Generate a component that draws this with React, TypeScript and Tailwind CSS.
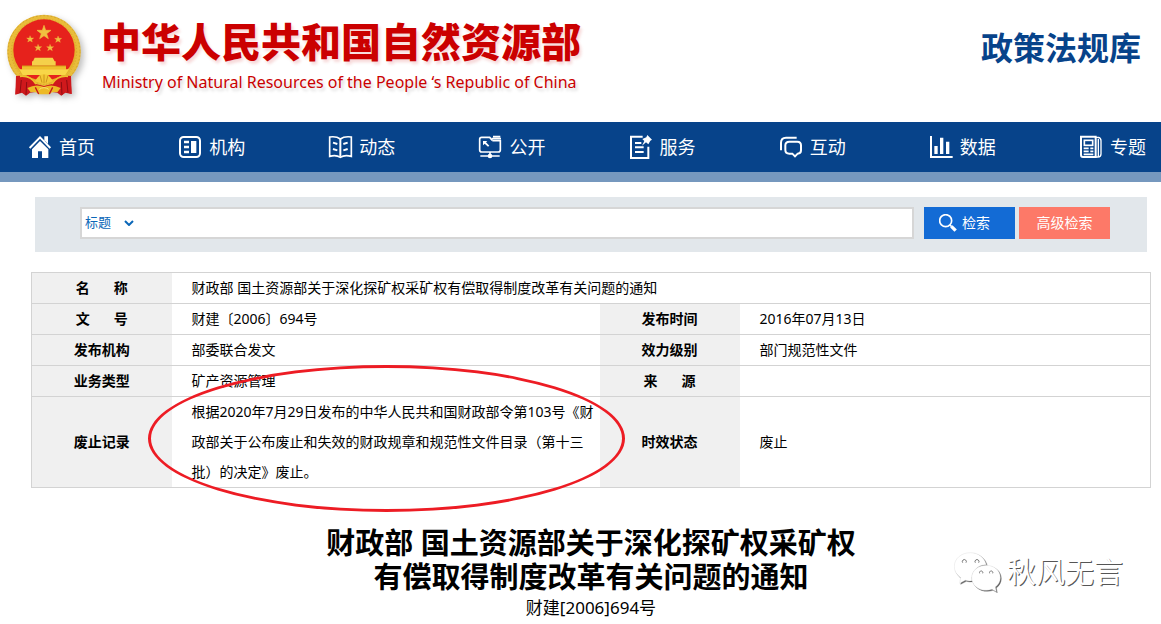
import type { ReactNode } from "react";

const Emblem = () => (
  <svg viewBox="15 20 240 264" className="h-22 w-20 shrink-0 drop-shadow-[3px_3px_3px_rgba(0,0,0,0.25)]" role="img" aria-label="国徽">
    <path d="M52 200 L46 268 L66 262 L78 271 L90 262 L132 256 L172 262 L184 271 L196 262 L215 266 L210 200 Z" fill="#c4161c" />
    <circle cx="132" cy="138" r="101" fill="#e3b02a" />
    <circle cx="132" cy="139" r="103" fill="none" stroke="#e9bd3a" strokeWidth="15" />
    <circle cx="132" cy="139" r="108" fill="none" stroke="#c4922a" strokeWidth="2" strokeDasharray="5 6" />
    <circle cx="132" cy="139" r="98" fill="none" stroke="#cf9c28" strokeWidth="2" strokeDasharray="4 5" />
    <circle cx="132" cy="134" r="92" fill="#e6221c" />
    <path d="M132 60 L137 75 L153 75 L140 85 L145 100 L132 91 L119 100 L124 85 L111 75 L127 75 Z" fill="#f0c040" stroke="#f0c040" strokeWidth="2" />
    <path id="star" d="M90 91 L93 98 L101 98 L95 103 L97 110 L90 106 L83 110 L86 103 L80 98 L88 98 Z" fill="#f0c040" stroke="#f0c040" strokeWidth="1" />
    <use href="#star" x="84" y="1" />
    <use href="#star" x="24" y="26" />
    <use href="#star" x="60" y="26" />
    <path d="M104 157 H158 L164 168 H99 Z M96 168 H167 V181 H96 Z" fill="#f5d04a" />
    <path d="M66 181 H198 V193 H66 Z" fill="#efc02c" />
    <path d="M58 192 H207 L196 209 H68 Z" fill="#f8d648" />
    <path d="M66 182 H198" stroke="#c98a12" strokeWidth="2" />
    <path d="M48 212 Q90 208 108 236 L132 242 L156 236 Q172 208 213 212 L215 266 L196 260 L184 270 L172 258 H92 L78 270 L66 260 L46 267 Z" fill="#cf191c" />
    <path d="M64 224 L60 262 M80 230 L78 268 M184 230 L186 268 M200 224 L204 262" stroke="#8e0d12" strokeWidth="3" fill="none" />
    <path d="M60 213 Q92 210 108 236 M204 213 Q172 210 156 236" stroke="#efbf2c" strokeWidth="5" fill="none" />
    <path d="M112 217 L120 209 L132 206 L144 209 L152 217 L160 228 L146 232 L132 236 L118 232 L104 228 Z" fill="#f4c836" />
    <path d="M132 208 V234 M120 210 L126 232 M144 210 L138 232" stroke="#b97b10" strokeWidth="2" />
    <path d="M82 248 Q108 234 132 245 Q156 234 182 248 L172 261 Q156 258 148 267 H116 Q108 258 92 261 Z" fill="#edb926" />
    <path d="M106 246 L116 266 M158 246 L148 266" stroke="#c4161c" strokeWidth="4" />
    <path d="M118 252 Q132 242 146 252" stroke="#fbe27a" strokeWidth="3" fill="none" />
  </svg>
);

const NavIcon = ({ children }: { children: ReactNode }) => (
  <svg viewBox="0 0 66 66" className="h-[22px] w-[22px] shrink-0 overflow-visible" fill="none" stroke="white" strokeWidth="6" aria-hidden="true">
    {children}
  </svg>
);

const navItems: { label: string; icon: ReactNode }[] = [
  {
    label: "首页",
    icon: (
      <NavIcon>
        <path d="M2 36 L33 4 L64 36" strokeWidth="6" />
        <path d="M46 1 H57 V24 L46 13 Z" fill="white" stroke="none" />
        <path d="M33 15 L58 40 V66 H39 V46 H27 V66 H9 V40 Z" fill="white" stroke="none" />
      </NavIcon>
    ),
  },
  {
    label: "机构",
    icon: (
      <NavIcon>
        <rect x="3" y="3" width="60" height="60" rx="11" />
        <path d="M15 18 H30 M15 33 H30 M15 48 H30" strokeWidth="7" />
        <rect x="36" y="15" width="16" height="36" fill="white" stroke="none" />
      </NavIcon>
    ),
  },
  {
    label: "动态",
    icon: (
      <NavIcon>
        <path d="M34 9 Q22 0 2 3 V61 Q22 56 34 64 Q46 56 67 61 V3 Q46 0 34 9 Z" strokeWidth="5" />
        <path d="M34 9 V62" strokeWidth="6" />
        <path d="M12 20 L25 24 M12 39 L25 43 M43 24 L56 20 M43 43 L56 39" strokeWidth="6" />
      </NavIcon>
    ),
  },
  {
    label: "公开",
    icon: (
      <NavIcon>
        <path d="M40 13 L32 4 H8 Q2 4 2 10 V42 Q2 48 8 48 H58 Q64 48 64 42 V14 H40" strokeWidth="5" />
        <path d="M42 2 H64 M38 8 H66" strokeWidth="5" />
        <path d="M12 15 H25 L21 19 L31 29 L27 32 L17 23 L12 28 Z" fill="white" stroke="none" />
        <path d="M33 48 V58 M4 60 H62" strokeWidth="5" />
        <circle cx="33" cy="60" r="7" fill="white" stroke="none" />
      </NavIcon>
    ),
  },
  {
    label: "服务",
    icon: (
      <NavIcon>
        <path d="M38 2 H3 V66 H55 V32" strokeWidth="6" />
        <path d="M15 21 H34 M15 34 H41 M15 48 H41" strokeWidth="6" />
        <path d="M52 -3 L66 11 L61 14 L55 25 L48 19 L36 29 L43 15 L37 9 L49 4 Z" fill="white" stroke="none" />
      </NavIcon>
    ),
  },
  {
    label: "互动",
    icon: (
      <NavIcon>
        <path d="M3 43 V20 Q3 5 18 5 H50" strokeWidth="6" />
        <path d="M28 17 H52 Q63 17 63 28 V43 Q63 53 53 53 L45 61 L37 53 H28 Q16 53 16 42 V28 Q16 17 28 17 Z" strokeWidth="6" />
      </NavIcon>
    ),
  },
  {
    label: "数据",
    icon: (
      <NavIcon>
        <path d="M3 0 V63 H68" strokeWidth="6" />
        <path d="M18 30 V54 M35 5 V54 M53 17 V54" strokeWidth="10" />
      </NavIcon>
    ),
  },
  {
    label: "专题",
    icon: (
      <NavIcon>
        <path d="M3 2 H47 V63 H9 Q3 63 3 57 Z" />
        <path d="M47 4 H56 Q63 6 63 14 V54 Q63 63 54 63 H46 M55 8 V62" strokeWidth="4" />
        <rect x="13" y="13" width="25" height="15" strokeWidth="5" />
        <path d="M11 37 H26 M31 37 H40 M11 46 H26 M31 46 H40 M11 55 H40" strokeWidth="5" />
      </NavIcon>
    ),
  },
];

const Label = ({ children }: { children: ReactNode }) => (
  <th scope="row" className="bg-[#f0f0f0] p-0 text-center font-bold">
    {children}
  </th>
);

const Value = ({ children, span }: { children?: ReactNode; span?: number }) => (
  <td colSpan={span} className="py-0 pr-0 pl-5 text-left">
    {children}
  </td>
);

const Spaced = ({ first, last }: { first: string; last: string }) => (
  <span className="inline-flex gap-6">
    <span>{first}</span>
    <span>{last}</span>
  </span>
);

export default function App() {
  return (
    <div className="relative min-h-screen overflow-hidden bg-white font-['Noto_Sans','Noto_Sans_CJK_SC',sans-serif] text-black">
      <header className="flex items-start justify-between pt-3 pr-5 pb-[22px] pl-[5px]">
        <div className="flex items-start">
          <Emblem />
          <div className="pt-1 pl-4">
            <h1 className="text-[40px] leading-[52px] font-black whitespace-nowrap text-[#cb0000] [text-shadow:2px_3px_3px_rgba(203,0,0,0.15)]">
              中华人民共和国自然资源部
            </h1>
            <p className="pl-px text-base leading-7 whitespace-nowrap text-[#cb0000] [text-shadow:2px_3px_3px_rgba(0,0,0,0.15)]">
              Ministry of Natural Resources of the People ‘s Republic of China
            </p>
          </div>
        </div>
        <div className="pt-3 text-[32px] leading-12 font-bold whitespace-nowrap text-[#07438a]">政策法规库</div>
      </header>

      <nav className="flex h-15 items-center justify-between border-b-10 border-[#7698be] bg-[#07438a] pr-[15px] pl-[29px]">
        {navItems.map((item) => (
          <a key={item.label} href="#" className="flex items-center gap-2 text-lg leading-6 whitespace-nowrap text-white">
            {item.icon}
            {item.label}
          </a>
        ))}
      </nav>

      <form className="mt-[15px] mr-[14px] ml-[35px] flex h-[55px] items-start bg-[#e2e7eb] pt-[10px] pr-[37px] pl-[45px] text-[13px]">
        <div className="mr-[10px] flex h-8 flex-1 items-center border-2 border-[#d6d6d6] bg-white">
          <div className="relative flex items-center">
            <select aria-label="检索范围" className="h-7 w-14 appearance-none bg-transparent pl-[3px] text-[#0b67b8]">
              <option>标题</option>
            </select>
            <svg viewBox="0 0 10 6" className="pointer-events-none absolute right-1 h-[6px] w-[10px]" fill="none" stroke="#0b67b8" strokeWidth="2" aria-hidden="true">
              <path d="M1 1 L5 5 L9 1" />
            </svg>
          </div>
          <input type="text" aria-label="检索词" className="h-7 min-w-0 flex-1 px-2 outline-none" />
        </div>
        <button type="button" className="mr-1 flex h-8 w-[91px] items-center gap-[5px] bg-[#136bd5] pl-[15px] text-sm text-white">
          <svg viewBox="0 0 54 54" className="h-[18px] w-[18px]" fill="none" stroke="white" aria-hidden="true">
            <circle cx="20" cy="20" r="18" strokeWidth="5" />
            <path d="M33 33 L38 38" strokeWidth="5" />
            <path d="M37 37 L50 50" strokeWidth="10" />
          </svg>
          检索
        </button>
        <button type="button" className="h-8 w-[91px] bg-[#fd7968] text-sm text-white">
          高级检索
        </button>
      </form>

      <main className="mt-5 mr-[10px] ml-[31px]">
        <div className="relative">
          <table className="w-full table-fixed border-collapse border border-[#d3d3d3] text-sm leading-[30px] [&_tr]:border-b [&_tr]:border-[#d3d3d3]">
            <colgroup>
              <col className="w-[140px]" />
              <col className="w-[428px]" />
              <col className="w-[140px]" />
              <col />
            </colgroup>
            <tbody>
              <tr>
                <Label><Spaced first="名" last="称" /></Label>
                <Value span={3}>财政部 国土资源部关于深化探矿权采矿权有偿取得制度改革有关问题的通知</Value>
              </tr>
              <tr>
                <Label><Spaced first="文" last="号" /></Label>
                <Value>财建〔2006〕694号</Value>
                <Label>发布时间</Label>
                <Value>2016年07月13日</Value>
              </tr>
              <tr>
                <Label>发布机构</Label>
                <Value>部委联合发文</Value>
                <Label>效力级别</Label>
                <Value>部门规范性文件</Value>
              </tr>
              <tr>
                <Label>业务类型</Label>
                <Value>矿产资源管理</Value>
                <Label><Spaced first="来" last="源" /></Label>
                <Value />
              </tr>
              <tr>
                <Label>废止记录</Label>
                <Value>根据2020年7月29日发布的中华人民共和国财政部令第103号《财政部关于公布废止和失效的财政规章和规范性文件目录（第十三批）的决定》废止。</Value>
                <Label>时效状态</Label>
                <Value>废止</Value>
              </tr>
            </tbody>
          </table>
          <div className="pointer-events-none absolute top-[93px] left-[117px] h-[147px] w-[477px] rounded-[50%] border-3 border-[#ed1c24]" />
        </div>

        <article className="pt-[38px] text-center">
          <h2 className="text-[29px] leading-[34px] font-bold">
            财政部 国土资源部关于深化探矿权采矿权
            <br />
            有偿取得制度改革有关问题的通知
          </h2>
          <p className="text-[17px] leading-7">财建[2006]694号</p>
        </article>
      </main>

      <div className="absolute right-[38px] bottom-8 flex items-center gap-[6px]">
        <svg viewBox="0 0 141 120" className="h-10 w-[47px] drop-shadow-[1px_1px_0_rgba(70,70,70,0.85)]" fill="white" stroke="#d0d0d0" strokeWidth="1" aria-hidden="true">
          <path d="M49 2 C22 2 1 20 1 43 C1 57 8 69 20 77 L17 94 L34 85 Q44 88 54 86 C50 60 70 38 97 38 C92 16 72 2 49 2 Z" />
          <path d="M97 40 C72 40 53 56 53 77 C53 99 72 115 97 115 Q106 115 114 112 L127 119 L124 105 C133 98 139 88 139 77 C139 56 121 40 97 40 Z" />
          <g fill="none" stroke="#777777" strokeWidth="3">
            <path d="M26 32 A6 6 0 1 1 36 32 M64 32 A6 6 0 1 1 74 32 M77 64 A5 5 0 1 1 86 64 M107 64 A5 5 0 1 1 116 64" />
          </g>
        </svg>
        <span className="text-[29px] leading-9 whitespace-nowrap text-white [text-shadow:1px_1px_0_#555555]">秋风无言</span>
      </div>
    </div>
  );
}
